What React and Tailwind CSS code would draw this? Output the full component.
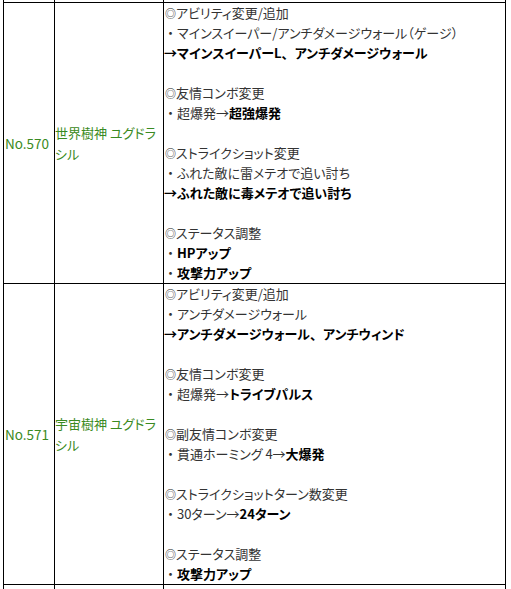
import React from "react";

const B = ({ children }) => <span className="font-bold text-black">{children}</span>;
const M = () => (
  <span className="inline-block w-[12px] text-[11px] leading-[20px] pl-[1px] text-[#222] [font-feature-settings:normal]">◎</span>
);
const D = () => <span className="[font-feature-settings:normal]">・</span>;
const C = () => <span className="[font-feature-settings:normal]">、</span>;

const row1 = [
  <><M />アビリティ変更/追加</>,
  <><D />マインスイーパー/アンチダメージウォール（ゲージ）</>,
  <B>→マインスイーパーL<C />アンチダメージウォール</B>,
  null,
  <><M />友情コンボ変更</>,
  <><D />超爆発→<B>超強爆発</B></>,
  null,
  <><M />ストライクショット変更</>,
  <><D />ふれた敵に雷メテオで追い討ち</>,
  <B>→ふれた敵に毒メテオで追い討ち</B>,
  null,
  <><M />ステータス調整</>,
  <><D /><B>HPアップ</B></>,
  <><D /><B>攻撃力アップ</B></>,
];

const row2 = [
  <><M />アビリティ変更/追加</>,
  <><D />アンチダメージウォール</>,
  <B>→アンチダメージウォール<C />アンチウィンド</B>,
  null,
  <><M />友情コンボ変更</>,
  <><D />超爆発→<B>トライブパルス</B></>,
  null,
  <><M />副友情コンボ変更</>,
  <><D />貫通ホーミング 4→<B>大爆発</B></>,
  null,
  <><M />ストライクショットターン数変更</>,
  <><D />30ターン→<B>24ターン</B></>,
  null,
  <><M />ステータス調整</>,
  <><D /><B>攻撃力アップ</B></>,
];

function Row({ no, name, lines }) {
  return (
    <div className="flex border-b border-black">
      <div className="w-[51px] shrink-0 border-r border-black flex items-center pl-[1px] text-[#3a8a22] text-[13.5px]">
        {no}
      </div>
      <div className="w-[109px] shrink-0 border-r border-black flex items-center text-[#3a8a22] leading-[21px]">
        <span>{name}</span>
      </div>
      <div className="w-[342px] shrink-0 border-r border-black text-[#333]">
        {lines.map((l, i) => (
          <div key={i} className="h-[20px] whitespace-nowrap">
            {l ?? "\u00a0"}
          </div>
        ))}
      </div>
    </div>
  );
}

function Stub({ h }) {
  return (
    <div className={`flex ${h}`}>
      <div className="w-[51px] shrink-0 border-r border-black" />
      <div className="w-[109px] shrink-0 border-r border-black" />
      <div className="w-[342px] shrink-0 border-r border-black" />
    </div>
  );
}

export default function App() {
  return (
    <div
      className="bg-white w-[511px] h-[589px] overflow-hidden pl-[3px] text-[13px] leading-[20px] [font-feature-settings:'palt']"
      style={{ fontFamily: '"Noto Sans CJK JP", "Noto Sans", sans-serif' }}
    >
      <div className="border-l border-black w-[503px]">
        <div className="flex h-[3px] border-b border-black">
          <div className="w-[51px] shrink-0 border-r border-black" />
          <div className="w-[109px] shrink-0 border-r border-black" />
          <div className="w-[342px] shrink-0 border-r border-black" />
        </div>
        <Row no="No.570" name="世界樹神 ユグドラシル" lines={row1} />
        <Row no="No.571" name="宇宙樹神 ユグドラシル" lines={row2} />
        <Stub h="h-[20px]" />
      </div>
    </div>
  );
}
